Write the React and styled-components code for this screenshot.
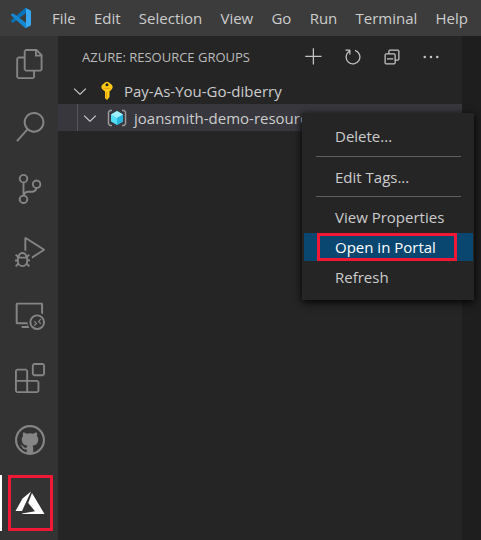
import React from "react";
import styled, { createGlobalStyle } from "styled-components";
import {
  VscFiles,
  VscSearch,
  VscSourceControl,
  VscDebugAlt,
  VscRemoteExplorer,
  VscExtensions,
  VscGithub,
  VscAdd,
  VscRefresh,
  VscCollapseAll,
  VscEllipsis,
  VscChevronDown,
} from "react-icons/vsc";

const GlobalStyle = createGlobalStyle`
  * { box-sizing: border-box; }
  body {
    margin: 0;
    overflow: hidden;
    background: #1e1e1e;
    color: #cccccc;
    font: 15px/20px "Open Sans", "Noto Sans", sans-serif;
  }
  button {
    font: inherit;
    color: inherit;
    background: none;
    border: 0;
    padding: 0;
    margin: 0;
  }
  svg { display: block; flex: none; }
`;

const Window = styled.div`
  display: flex;
  flex-direction: column;
  height: 100vh;
`;

const TitleBar = styled.header`
  display: flex;
  align-items: center;
  flex: none;
  height: 36px;
  padding-left: 11px;
  background: #3c3c3c;
`;

const MenuBar = styled.nav`
  display: flex;
  flex: 1;
  justify-content: space-between;
  padding: 0 13px 0 21px;
`;

const MenuBarButton = styled.button`
  white-space: nowrap;
`;

const Workbench = styled.div`
  display: flex;
  flex: 1;
  min-height: 0;
`;

const ActivityBar = styled.nav`
  display: flex;
  flex-direction: column;
  justify-content: space-between;
  flex: none;
  width: 58px;
  padding-bottom: 9px;
  background: #333333;
`;

const Activity = styled.button`
  position: relative;
  display: flex;
  align-items: center;
  justify-content: center;
  height: 56px;
  color: ${(p) => (p.$active ? "#ffffff" : "#858585")};
  border-left: 2px solid ${(p) => (p.$active ? "#ffffff" : "transparent")};
`;

const Highlight = styled.span`
  position: absolute;
  inset: ${(p) => p.$inset};
  border: 3px solid #f01834;
  pointer-events: none;
`;

const SideBar = styled.section`
  flex: 1;
  min-width: 0;
  background: #252526;
`;

const Editor = styled.main`
  flex: none;
  width: 19px;
  background: #1e1e1e;
`;

const PanelHeader = styled.div`
  display: flex;
  align-items: center;
  justify-content: space-between;
  height: 42px;
  padding: 0 21px 0 24px;
`;

const PanelTitle = styled.h2`
  margin: 0;
  font-size: 13px;
  font-weight: 400;
  color: #bbbbbb;
  white-space: nowrap;
`;

const Toolbar = styled.div`
  display: flex;
  gap: 19px;
`;

const ToolButton = styled.button`
  color: #c5c5c5;
`;

const Tree = styled.div`
  overflow: hidden;
`;

const TreeRow = styled.div`
  display: flex;
  align-items: center;
  height: ${(p) => (p.$selected ? 27 : 26)}px;
  padding-left: ${(p) => (p.$selected ? 19 : 12)}px;
  background: ${(p) => (p.$selected ? "#37373d" : "transparent")};
  white-space: nowrap;
`;

const IndentGuide = styled.span`
  align-self: stretch;
  width: 1px;
  margin-right: 2px;
  background: #585858;
`;

const TreeIcon = styled.span`
  display: flex;
  justify-content: center;
  width: 20px;
  margin: 0 7px;
`;

const ContextMenu = styled.div`
  position: absolute;
  top: 113px;
  right: 7px;
  width: 172px;
  padding: 7px 1px 7px 2px;
  background: #252526;
  box-shadow: 0 2px 8px #000000;
`;

const MenuItem = styled.button`
  position: relative;
  display: block;
  width: 100%;
  height: ${(p) => (p.$active ? 28 : 32)}px;
  padding-left: 31px;
  text-align: left;
  white-space: nowrap;
  color: ${(p) => (p.$active ? "#ffffff" : "#cccccc")};
  background: ${(p) => (p.$active ? "#094771" : "transparent")};
`;

const Separator = styled.hr`
  height: 1px;
  margin: ${(p) => p.$top}px 12px 4px;
  border: 0;
  background: #606060;
`;

function CodeLogo() {
  return (
    <svg width="20" height="20" viewBox="0 0 100 100" aria-hidden="true">
      <path fill="#0873bb" d="M96 11 75 1a6 6 0 0 0-7 1L1 62a4 4 0 0 0 0 6l6 5a4 4 0 0 0 5 0L93 12z" />
      <path fill="#1688d2" d="M96 89 75 99a6 6 0 0 1-7-1L1 38a4 4 0 0 1 0-6l6-5a4 4 0 0 1 5 0l81 61z" />
      <path fill="#37a9f2" d="M75 99a6 6 0 0 1-7-1c2 2 7 1 7-4V6c0-5-5-6-7-4a6 6 0 0 1 7-1l21 10a6 6 0 0 1 4 6v66a6 6 0 0 1-4 6z" />
    </svg>
  );
}

function AzureLogo() {
  return (
    <svg width="30" height="24" viewBox="0 0 30 24" fill="currentColor" aria-hidden="true">
      <path d="M16 .5 7.500 7.500.5 20H7z" />
      <path d="M17 2 13.200 12l6.800 8.300L7 22.600V23h22.500z" />
    </svg>
  );
}

function KeyIcon() {
  return (
    <svg width="14" height="20" viewBox="0 0 14 20" aria-hidden="true">
      <path fill="#ffca16" fillRule="evenodd" d="M5 1.500Q7 0 9 1.500L12 4q1.500 2 0 4l-2.500 2.500V16L7 19l-2-2v-6.500L2 8Q.5 6 2 4zM7 2.200a1.500 1.500 0 1 0 0 3 1.500 1.500 0 0 0 0-3z" />
      <path fill="#f0a30a" d="M3.500 7h7v1h-7zM6 11h1v6H6z" />
    </svg>
  );
}

function ResourceGroupIcon() {
  return (
    <svg width="20" height="18" viewBox="0 0 20 18" aria-hidden="true">
      <path fill="none" stroke="#999999" strokeWidth="1.500" d="M5 1.500H3L1.500 3v12L3 16.500h2M15 1.500h2L18.500 3v12L17 16.500h-2" />
      <path fill="#50dff7" d="m10 2 6 3.500v7L10 16l-6-3.500v-7z" />
      <path fill="#a1f0fc" d="m10 2 6 3.500L10 9 4 5.500z" />
      <path fill="#27b5df" d="m10 9 6-3.500v7L10 16z" />
    </svg>
  );
}

const menus = ["File", "Edit", "Selection", "View", "Go", "Run", "Terminal", "Help"];

const activities = [
  ["Explorer", VscFiles],
  ["Search", VscSearch],
  ["Source Control", VscSourceControl],
  ["Run and Debug", VscDebugAlt],
  ["Remote Explorer", VscRemoteExplorer],
  ["Extensions", VscExtensions],
  ["GitHub", VscGithub],
];

const tools = [
  ["Add", VscAdd],
  ["Refresh resources", VscRefresh],
  ["Collapse All", VscCollapseAll],
  ["More Actions", VscEllipsis],
];

export default function App() {
  return (
    <>
      <GlobalStyle />
      <Window>
        <TitleBar>
          <CodeLogo />
          <MenuBar>
            {menus.map((name) => (
              <MenuBarButton key={name}>{name}</MenuBarButton>
            ))}
          </MenuBar>
        </TitleBar>
        <Workbench>
          <ActivityBar>
            {activities.map(([name, Icon]) => (
              <Activity key={name} aria-label={name}>
                <Icon size={30} />
              </Activity>
            ))}
            <Activity $active aria-label="Azure">
              <AzureLogo />
              <Highlight $inset="0 5px 0 6px" />
            </Activity>
          </ActivityBar>
          <SideBar>
            <PanelHeader>
              <PanelTitle>AZURE: RESOURCE GROUPS</PanelTitle>
              <Toolbar>
                {tools.map(([name, Icon]) => (
                  <ToolButton key={name} aria-label={name}>
                    <Icon size={20} />
                  </ToolButton>
                ))}
              </Toolbar>
            </PanelHeader>
            <Tree>
              <TreeRow>
                <VscChevronDown size={20} />
                <TreeIcon>
                  <KeyIcon />
                </TreeIcon>
                Pay-As-You-Go-diberry
              </TreeRow>
              <TreeRow $selected>
                <IndentGuide />
                <VscChevronDown size={20} />
                <TreeIcon>
                  <ResourceGroupIcon />
                </TreeIcon>
                joansmith-demo-resource-group
              </TreeRow>
            </Tree>
          </SideBar>
          <Editor />
        </Workbench>
      </Window>
      <ContextMenu>
        <MenuItem>Delete...</MenuItem>
        <Separator $top={4} />
        <MenuItem>Edit Tags...</MenuItem>
        <Separator $top={3} />
        <MenuItem>View Properties</MenuItem>
        <MenuItem $active>
          Open in Portal
          <Highlight $inset="0 16px 0 13px" />
        </MenuItem>
        <MenuItem>Refresh</MenuItem>
      </ContextMenu>
    </>
  );
}
